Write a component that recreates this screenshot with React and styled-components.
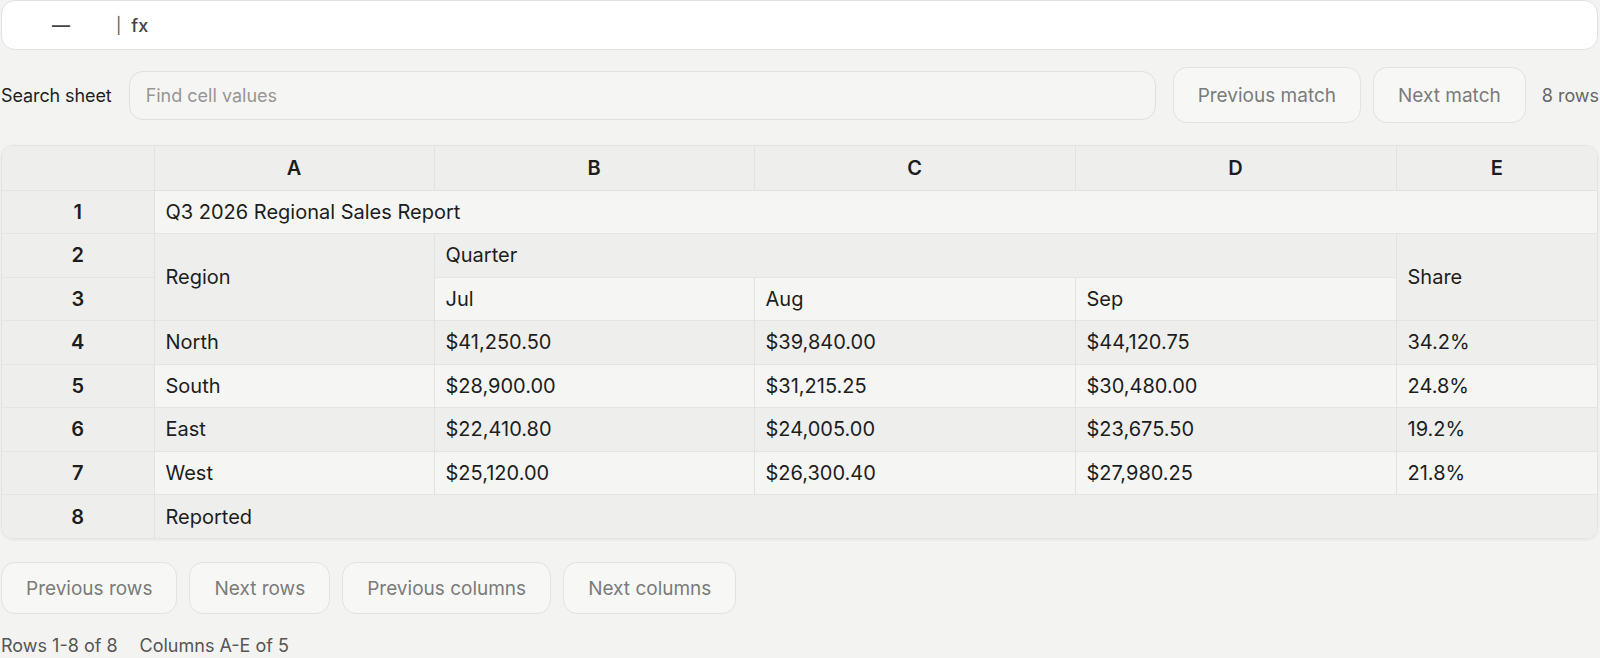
import React from "react";
import styled, { createGlobalStyle } from "styled-components";

const GlobalStyle = createGlobalStyle`
  html, body {
    margin: 0;
    padding: 0;
    overflow: hidden;
    background: #f3f4f1;
    font-family: Inter, "Noto Sans", "Liberation Sans", sans-serif;
    color: #1d1d1d;
  }
  * { box-sizing: border-box; }
`;

const Page = styled.div`
  width: 1660px;
  padding: 0 2px 0 1px;
  display: flex;
  flex-direction: column;
`;

const FormulaBar = styled.div`
  width: 1597px;
  height: 50px;
  background: #ffffff;
  border: 1px solid #e1e2df;
  border-radius: 14px;
  display: flex;
  align-items: center;
  font-size: 18px;
  color: #444;
`;

const NameBox = styled.span`
  width: 118px;
  text-align: center;
  font-weight: 500;
`;

const Pipe = styled.span`
  margin-left: -4px;
  font-size: 16px;
  color: #555;
`;

const Fx = styled.span`
  margin-left: 10px;
  font-weight: 500;
  font-size: 18px;
`;

const SearchRow = styled.div`
  margin-top: 17px;
  height: 56px;
  display: flex;
  align-items: center;
  gap: 12px;
`;

const Label = styled.label`
  font-size: 18px;
  color: #1f1f1f;
  margin-right: 5px;
  letter-spacing: -0.1px;
`;

const SearchInput = styled.input`
  width: 1027px;
  height: 49px;
  border: 1px solid #e0e1de;
  border-radius: 14px;
  background: #f5f6f3;
  padding: 0 16px;
  font: inherit;
  font-size: 18px;
  margin-right: 5px;
  outline: none;
  &::placeholder { color: #959595; }
`;

const Button = styled.button`
  height: ${p => p.$h || 56}px;
  padding: 0 ${p => p.$px || 24}px;
  border: 1px solid #e2e3e0;
  border-radius: 14px;
  background: #f7f8f5;
  color: #7b7b7b;
  font-family: inherit;
  font-size: 19px;
  white-space: nowrap;
  cursor: default;
`;

const Count = styled.span`
  margin-left: 4px;
  font-size: 18px;
  color: #666;
  white-space: nowrap;
`;

const TableWrap = styled.div`
  margin-top: 22px;
  width: 1597px;
  border: 1px solid #e3e4e1;
  border-radius: 12px;
  overflow: hidden;
  box-shadow: 0 1px 3px rgba(0, 0, 0, 0.06);
`;

const Sheet = styled.table`
  width: 100%;
  border-collapse: collapse;
  table-layout: fixed;
  font-size: 20px;
`;

const ColHead = styled.th`
  height: 44px;
  background: #eeefed;
  font-weight: 600;
  text-align: center;
  border-left: 1px solid #e2e3e0;
  border-bottom: 1px solid #e2e3e0;
  &:first-child { border-left: none; }
`;

const RowHead = styled.th`
  height: 43.5px;
  background: #eeefed;
  font-weight: 600;
  text-align: center;
  border-top: 1px solid #e4e5e2;
`;

const Cell = styled.td`
  height: 43.5px;
  padding: 0 11px;
  background: ${p => (p.$dark ? "#eeefed" : "#f5f6f3")};
  border-left: 1px solid #e2e3e0;
  border-top: 1px solid #e4e5e2;
  white-space: nowrap;
  font-weight: 400;
`;

const Pager = styled.div`
  margin-top: 23px;
  display: flex;
  gap: 12px;
`;

const Status = styled.div`
  margin-top: 21px;
  display: flex;
  gap: 22px;
  font-size: 18px;
  color: #555;
`;

const cols = [
  { key: "", w: 152 },
  { key: "A", w: 280 },
  { key: "B", w: 320 },
  { key: "C", w: 321 },
  { key: "D", w: 321 },
  { key: "E", w: 201 },
];

const data = [
  ["North", "$41,250.50", "$39,840.00", "$44,120.75", "34.2%"],
  ["South", "$28,900.00", "$31,215.25", "$30,480.00", "24.8%"],
  ["East", "$22,410.80", "$24,005.00", "$23,675.50", "19.2%"],
  ["West", "$25,120.00", "$26,300.40", "$27,980.25", "21.8%"],
];

export default function App() {
  return (
    <>
      <GlobalStyle />
      <Page>
        <FormulaBar>
          <NameBox>—</NameBox>
          <Pipe>|</Pipe>
          <Fx>fx</Fx>
        </FormulaBar>

        <SearchRow>
          <Label>Search sheet</Label>
          <SearchInput placeholder="Find cell values" />
          <Button>Previous match</Button>
          <Button>Next match</Button>
          <Count>8 rows</Count>
        </SearchRow>

        <TableWrap>
          <Sheet>
            <colgroup>
              {cols.map((c, i) => (
                <col key={i} style={{ width: c.w }} />
              ))}
            </colgroup>
            <thead>
              <tr>
                {cols.map((c, i) => (
                  <ColHead key={i}>{c.key}</ColHead>
                ))}
              </tr>
            </thead>
            <tbody>
              <tr>
                <RowHead>1</RowHead>
                <Cell colSpan={5}>Q3 2026 Regional Sales Report</Cell>
              </tr>
              <tr>
                <RowHead>2</RowHead>
                <Cell $dark rowSpan={2}>Region</Cell>
                <Cell $dark colSpan={3}>Quarter</Cell>
                <Cell $dark rowSpan={2}>Share</Cell>
              </tr>
              <tr>
                <RowHead>3</RowHead>
                <Cell>Jul</Cell>
                <Cell>Aug</Cell>
                <Cell>Sep</Cell>
              </tr>
              {data.map((row, r) => (
                <tr key={r}>
                  <RowHead>{r + 4}</RowHead>
                  {row.map((v, i) => (
                    <Cell key={i} $dark={r % 2 === 0}>{v}</Cell>
                  ))}
                </tr>
              ))}
              <tr>
                <RowHead>8</RowHead>
                <Cell $dark colSpan={5}>Reported</Cell>
              </tr>
            </tbody>
          </Sheet>
        </TableWrap>

        <Pager>
          <Button $h={52}>Previous rows</Button>
          <Button $h={52}>Next rows</Button>
          <Button $h={52}>Previous columns</Button>
          <Button $h={52}>Next columns</Button>
        </Pager>

        <Status>
          <span>Rows 1-8 of 8</span>
          <span>Columns A-E of 5</span>
        </Status>
      </Page>
    </>
  );
}
